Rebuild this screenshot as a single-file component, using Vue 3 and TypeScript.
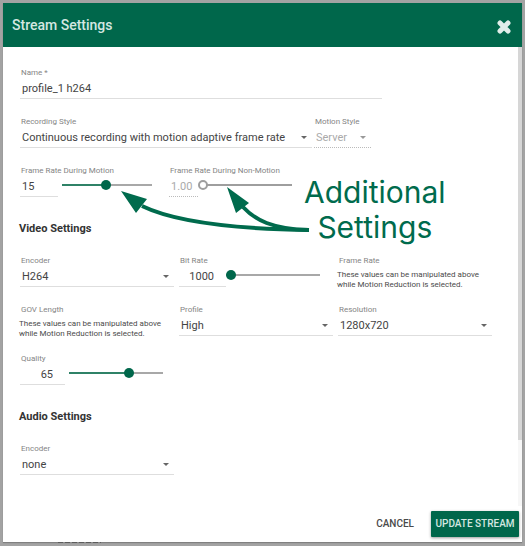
<script setup lang="ts">
import { computed, ref } from 'vue'

const name = ref('profile_1 h264')
const recordingStyle = ref('Continuous recording with motion adaptive frame rate')
const motionStyle = ref('Server')
const motionRate = ref(15)
const idleRate = ref(1)
const encoder = ref('H264')
const bitRate = ref(1000)
const profile = ref('High')
const resolution = ref('1280x720')
const quality = ref(65)
const audioEncoder = ref('none')

const fill = (value: number, min: number, max: number) => ({
  '--fill': `${((value - min) / (max - min)) * 100}%`,
})
const motionFill = computed(() => fill(motionRate.value, 1, 30))
const bitFill = computed(() => fill(bitRate.value, 1000, 8000))
const qualityFill = computed(() => fill(quality.value, 0, 100))
</script>

<template>
  <div class="page">
    <form class="dialog" role="dialog" aria-labelledby="title" @submit.prevent>
      <header class="head">
        <h1 id="title">Stream Settings</h1>
        <button type="button" class="close" aria-label="Close">
          <svg viewBox="0 0 14 14" width="14" height="14">
            <path d="M3 3 L11 11 M11 3 L3 11" />
          </svg>
        </button>
      </header>

      <main class="body">
        <div class="row">
          <div class="field name">
            <label for="name">Name *</label>
            <div class="control"><input id="name" v-model="name" type="text" /></div>
          </div>
        </div>

        <div class="row tight">
          <div class="field recording">
            <label for="recording">Recording Style</label>
            <div class="control">
              <select id="recording" v-model="recordingStyle">
                <option>Continuous recording with motion adaptive frame rate</option>
              </select>
              <svg class="caret" viewBox="0 0 6 3"><path d="M0 0H6L3 3Z" /></svg>
            </div>
          </div>
          <div class="field motion off">
            <label for="motion">Motion Style</label>
            <div class="control">
              <select id="motion" v-model="motionStyle" disabled>
                <option>Server</option>
              </select>
              <svg class="caret" viewBox="0 0 6 3"><path d="M0 0H6L3 3Z" /></svg>
            </div>
          </div>
        </div>

        <div class="row rates">
          <div class="field">
            <label for="rate">Frame Rate During Motion</label>
            <div class="pair">
              <div class="control short"><input id="rate" v-model.number="motionRate" type="text" /></div>
              <input v-model.number="motionRate" class="slider narrow" type="range" min="1" max="30" aria-label="Frame Rate During Motion slider" :style="motionFill" />
            </div>
          </div>
          <div class="field off">
            <label for="idle">Frame Rate During Non-Motion</label>
            <div class="pair joined">
              <div class="control tiny"><input id="idle" :value="idleRate.toFixed(2)" type="text" disabled /></div>
              <input v-model.number="idleRate" class="slider" type="range" min="1" max="30" disabled aria-label="Frame Rate During Non-Motion slider" />
            </div>
          </div>
        </div>

        <h2>Video Settings</h2>
        <div class="grid">
          <div class="field">
            <label for="encoder">Encoder</label>
            <div class="control">
              <select id="encoder" v-model="encoder"><option>H264</option></select>
              <svg class="caret" viewBox="0 0 6 3"><path d="M0 0H6L3 3Z" /></svg>
            </div>
          </div>
          <div class="field">
            <label for="bitrate">Bit Rate</label>
            <div class="pair joined">
              <div class="control number"><input id="bitrate" v-model.number="bitRate" type="text" /></div>
              <input v-model.number="bitRate" class="slider" type="range" min="1000" max="8000" aria-label="Bit Rate slider" :style="bitFill" />
            </div>
          </div>
          <div class="field">
            <span class="label">Frame Rate</span>
            <p>These values can be manipulated above while Motion Reduction is selected.</p>
          </div>
          <div class="field">
            <span class="label">GOV Length</span>
            <p>These values can be manipulated above while Motion Reduction is selected.</p>
          </div>
          <div class="field">
            <label for="profile">Profile</label>
            <div class="control">
              <select id="profile" v-model="profile"><option>High</option></select>
              <svg class="caret" viewBox="0 0 6 3"><path d="M0 0H6L3 3Z" /></svg>
            </div>
          </div>
          <div class="field">
            <label for="resolution">Resolution</label>
            <div class="control">
              <select id="resolution" v-model="resolution"><option>1280x720</option></select>
              <svg class="caret" viewBox="0 0 6 3"><path d="M0 0H6L3 3Z" /></svg>
            </div>
          </div>
          <div class="field">
            <label for="quality">Quality</label>
            <div class="pair quality">
              <div class="control number"><input id="quality" v-model.number="quality" type="text" /></div>
              <input v-model.number="quality" class="slider" type="range" min="0" max="100" aria-label="Quality slider" :style="qualityFill" />
            </div>
          </div>
        </div>

        <h2>Audio Settings</h2>
        <div class="grid">
          <div class="field">
            <label for="audio">Encoder</label>
            <div class="control">
              <select id="audio" v-model="audioEncoder"><option>none</option></select>
              <svg class="caret" viewBox="0 0 6 3"><path d="M0 0H6L3 3Z" /></svg>
            </div>
          </div>
        </div>

        <div class="scrollbar"><div class="thumb"></div></div>

        <div class="callout">
          <svg viewBox="0 0 192 46" width="192" height="46">
            <path class="shaft" d="M22 19 C55 35 120 42 189 43" />
            <path class="shaft" d="M123 20 C135 33 152 42 189 43" />
            <path d="M1 4 L27 12 L16 26Z M107 0 L129 16 L116 26Z" />
          </svg>
          <p>Additional<br />Settings</p>
        </div>
      </main>

      <footer class="foot">
        <button type="button" class="cancel">CANCEL</button>
        <button type="submit" class="update">UPDATE STREAM</button>
      </footer>
    </form>
  </div>
</template>

<style>
body {
  margin: 0;
  background: #a3a3a3;
}
</style>

<style scoped>
* {
  box-sizing: border-box;
}

.page {
  position: relative;
  height: 100vh;
  padding: 3px 3px 4px;
  font-family: Roboto, sans-serif;
  color: #4a4a4a;
}

/* Edge of the page content that peeks out from behind the dialog */
.page::after {
  content: '';
  position: absolute;
  bottom: 3px;
  left: 58px;
  width: 43px;
  height: 1px;
  background: repeating-linear-gradient(90deg, #5c5c5c 0 5px, #8c8c8c 5px 7px);
}

.dialog {
  display: flex;
  flex-direction: column;
  height: 100%;
  background: #fff;
  box-shadow: 0 1px 1px #808080;
}

.head {
  display: flex;
  align-items: center;
  justify-content: space-between;
  flex: none;
  height: 44px;
  padding: 0 11px 0 9px;
  background: #00674b;
  color: #d4e7e1;
}

h1 {
  margin: 0;
  font-size: 14px;
  font-weight: 500;
}

button {
  padding: 0;
  border: 0;
  background: none;
  font: 500 10px/26px Roboto, sans-serif;
  color: #4a4a4a;
}

.close {
  display: flex;
  padding-top: 3px;
}

.close path {
  stroke: #e0eeea;
  stroke-width: 5;
  stroke-linecap: round;
}

.body {
  position: relative;
  flex: 1;
  padding: 19px 30px 0 17px;
}

.row {
  display: flex;
  gap: 17px;
  margin-bottom: 16px;
}

.tight {
  gap: 2px;
}

.rates {
  margin-bottom: 0;
}

.grid {
  display: grid;
  grid-template-columns: repeat(3, 1fr);
  gap: 16px 5px;
}

.name {
  width: 362px;
}

.recording {
  width: 292px;
}

.motion {
  width: 57px;
}

label,
.label {
  display: block;
  padding: 2px 0 0 1px;
  font-size: 8px;
  line-height: 10px;
  color: #858585;
  white-space: nowrap;
}

.control {
  position: relative;
  height: 21px;
  border-bottom: 1px solid #dedede;
}

.control input,
.control select {
  display: block;
  width: 100%;
  height: 20px;
  margin: 0;
  padding: 1px 0 0 2px;
  border: 0;
  outline: 0;
  appearance: none;
  background: none;
  font: 11px/19px Roboto, sans-serif;
  color: #444;
}

.caret {
  position: absolute;
  right: 5px;
  top: 9px;
  width: 6px;
  height: 3px;
  fill: #666;
  pointer-events: none;
}

.off .control {
  border-bottom: 1px dotted #bbb;
}

.off .control input,
.off .control select {
  color: #aaa;
  opacity: 1;
}

.off .caret {
  fill: #999;
}

.pair {
  display: flex;
  gap: 4px;
}

.joined {
  gap: 0;
}

.short {
  width: 38px;
}

.tiny {
  width: 29px;
}

.number {
  width: 47px;
}

.quality .number {
  width: 45px;
}

.control.number input {
  padding: 1px 12px 0 0;
  text-align: right;
}

.slider {
  width: 94px;
  height: 18px;
  margin: 0;
  appearance: none;
  background: linear-gradient(#9e9e9e, #9e9e9e) right center / calc(100% - 5px) 2px no-repeat;
}

.slider.narrow {
  width: 90px;
}

.slider:enabled {
  background:
    linear-gradient(#2f8267, #2f8267) left center / var(--fill) 2px no-repeat,
    linear-gradient(#a8a8a8, #a8a8a8) center / 100% 2px no-repeat;
}

.slider::-webkit-slider-thumb {
  width: 10px;
  height: 10px;
  border-radius: 50%;
  appearance: none;
  background: #00674b;
}

.slider:disabled::-webkit-slider-thumb {
  border: 2px solid #9e9e9e;
  background: #fff;
}

h2 {
  margin: 24px 0 17px -1px;
  font-size: 11px;
  font-weight: 700;
  line-height: 16px;
  color: #333;
}

p {
  margin: 4px 0 -3px -1px;
  font-size: 8px;
  line-height: 10px;
}

.scrollbar {
  position: absolute;
  top: 0;
  right: 0;
  bottom: 0;
  display: grid;
  grid-template-rows: 6fr 1fr;
  width: 4px;
  background: #f7f7f7;
}

.thumb {
  background: #d6d6d6;
}

.callout {
  position: absolute;
  top: 140px;
  left: 117px;
  display: flex;
  pointer-events: none;
  color: #006b4d;
}

.callout svg {
  fill: #006b4d;
}

.callout .shaft {
  fill: none;
  stroke: #006b4d;
  stroke-width: 4;
}

.callout p {
  margin: -12px 0 0 -8px;
  font-family: Inter, sans-serif;
  font-size: 30px;
  line-height: 35px;
  text-align: center;
}

.foot {
  display: flex;
  align-items: center;
  justify-content: flex-end;
  gap: 17px;
  flex: none;
  height: 36px;
  padding-right: 3px;
}

.update {
  width: 88px;
  border-radius: 1px;
  background: #00674b;
  color: #d4e7e1;
  box-shadow: 0 1px 3px #999;
}
</style>
